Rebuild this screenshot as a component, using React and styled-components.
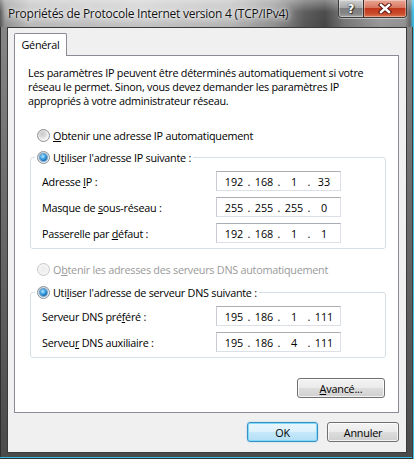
import React from 'react';
import styled, { createGlobalStyle } from 'styled-components';

const FONT = `"Open Sans", "Noto Sans", "DejaVu Sans", sans-serif`;

const Global = createGlobalStyle`
  html, body { margin: 0; padding: 0; background: #ffffff; }
  body { font-family: ${FONT}; font-size: 10.8px; letter-spacing: -0.25px; color: #000; }
  * { box-sizing: border-box; }
`;

const Window = styled.div`
  width: 414px;
  height: 459px;
  display: flex;
  flex-direction: column;
  padding: 0 7px 6px 7px;
  background: linear-gradient(to bottom, #8a8a8a 0, #6e6e6e 40%, #4a4a4a 100%);
  box-shadow: inset -1px 0 0 #3fc4ee, inset -2px 0 0 #3a3a3a, inset 0 -1px 0 #2f2f2f,
    inset 0 -2px 0 #38bde8, inset 1px 0 0 #2e2e2e;
`;

const TitleBar = styled.div`
  height: 27px;
  margin: 0 -7px;
  padding: 0 7px 0 8px;
  display: flex;
  align-items: flex-start;
  background:
    linear-gradient(to bottom, rgba(255, 255, 255, 0.35) 0, rgba(255, 255, 255, 0) 12px, rgba(0, 0, 0, 0.08) 27px),
    linear-gradient(to right, #5a5a5a 0, #9c9c9c 5px, #c6c6c6 30px, #d2d2d2 140px, #c2c2c2 230px,
      #9a9a9a 275px, #5e5e5e 305px, #4c4c4c 325px, #7e7e7e 345px, #a2a2a2 380px, #9a9a9a 405px,
      #6a6a6a 410px, #3fc4ee 413px);
`;

const TitleText = styled.div`
  margin-top: 6px;
  line-height: 16px;
  font-size: 12px;
  letter-spacing: -0.25px;
  color: #111;
  white-space: nowrap;
  text-shadow: 0 0 6px #fff, 0 0 10px rgba(255, 255, 255, 0.9), 0 0 2px rgba(255, 255, 255, 0.8);
  flex: 1;
`;

const CaptionGroup = styled.div`
  display: flex;
  height: 18px;
  border: 1px solid #3b3b3b;
  border-top: none;
  border-radius: 0 0 4px 4px;
  overflow: hidden;
  box-shadow: 0 1px 0 rgba(255, 255, 255, 0.45);
`;

const CaptionButton = styled.div`
  width: ${(p) => p.$w}px;
  height: 100%;
  display: flex;
  align-items: center;
  justify-content: center;
  border-left: ${(p) => (p.$first ? 'none' : '1px solid #3b2a26')};
  box-shadow: inset 0 0 0 1px rgba(255, 255, 255, 0.35);
  background: ${(p) =>
    p.$close
      ? 'linear-gradient(to bottom, #e9a795 0, #d9775f 45%, #c2381c 50%, #c94a2c 80%, #e07a52 100%)'
      : 'linear-gradient(to bottom, #d0d0d0 0, #a9a9a9 45%, #7f7f7f 50%, #858585 80%, #a8a8a8 100%)'};
`;

const HelpGlyph = styled.span`
  font-family: "DejaVu Sans", sans-serif;
  font-weight: bold;
  font-size: 12px;
  line-height: 12px;
  letter-spacing: 0;
  color: #fff;
  text-shadow: 0 0 1px #222, 0 0 1px #222, 1px 1px 1px #333;
`;

const Client = styled.div`
  flex: 1;
  background: #f0f0f0;
  border: 1px solid #3a3a3a;
  padding: 5px 7px 0 6px;
  display: flex;
  flex-direction: column;
`;

const TabStrip = styled.div`
  display: flex;
  height: 22px;
`;

const Tab = styled.div`
  position: relative;
  z-index: 1;
  width: 53px;
  height: 23px;
  background: #fff;
  border: 1px solid #898c95;
  border-bottom: none;
  border-radius: 2px 2px 0 0;
  display: flex;
  align-items: center;
  justify-content: center;
  padding-bottom: 1px;
`;

const Panel = styled.div`
  background: #fff;
  border: 1px solid #898c95;
  padding: 10px 13px 14px 13px;
  display: flex;
  flex-direction: column;
`;

const Intro = styled.p`
  margin: 0;
  line-height: 14px;
  white-space: nowrap;
`;

const RadioRow = styled.div`
  display: flex;
  align-items: center;
  gap: 3px;
  height: 16px;
  padding-left: 9px;
  margin-top: ${(p) => p.$mt}px;
  color: ${(p) => (p.$disabled ? '#9a9a9a' : '#000')};
  white-space: nowrap;
`;

const RadioCircle = styled.span`
  flex: none;
  width: 13px;
  height: 13px;
  border-radius: 50%;
  border: 1px solid ${(p) => (p.$disabled ? '#c9c9c9' : '#8c8f92')};
  background: ${(p) =>
    p.$disabled
      ? 'radial-gradient(circle at 50% 50%, #ececec 0, #f2f2f2 50%, #f7f7f7 100%)'
      : 'radial-gradient(circle at 40% 35%, #c9c9c9 0, #dcdcdc 35%, #f4f4f4 62%, #fdfdfd 100%)'};
  display: flex;
  align-items: center;
  justify-content: center;
  &::after {
    content: '';
    display: ${(p) => (p.$checked ? 'block' : 'none')};
    width: 7px;
    height: 7px;
    border-radius: 50%;
    background: radial-gradient(circle at 40% 35%, #b8ecff 0, #3fa3e6 40%, #0b5a9e 80%, #093f74 100%);
    box-shadow: 0 0 0 1px rgba(30, 90, 150, 0.45), 0 0 2px 1px rgba(120, 200, 255, 0.6);
  }
`;

const Key = styled.span`
  text-decoration: underline;
  text-underline-offset: 1px;
`;

const Group = styled.fieldset`
  margin: ${(p) => p.$mt}px 0 0 2px;
  width: 356px;
  min-width: 0;
  padding: 0;
  border: 1px solid #d5dfe5;
  border-radius: 3px;
`;

const Legend = styled.legend`
  margin-left: 4px;
  padding: 0 2px 0 0;
  height: 16px;
  display: flex;
  align-items: center;
  gap: 3px;
  white-space: nowrap;
`;

const LegendRadio = styled(RadioCircle)`
  margin-left: 2px;
`;

const FieldGrid = styled.div`
  display: grid;
  grid-template-columns: 174px 125px;
  row-gap: 6px;
  align-items: center;
  padding: 6px 0 5px 11px;
`;

const FieldLabel = styled.div`
  white-space: nowrap;
`;

const IpBox = styled.div`
  height: 20px;
  width: 125px;
  background: #fff;
  border: 1px solid #dbdfe6;
  border-top-color: #abadb3;
  border-left-color: #c9ccd3;
  display: flex;
  align-items: center;
  padding-left: 4px;
  letter-spacing: 0;
`;

const Octet = styled.span`
  width: 26px;
  text-align: center;
`;

const Dot = styled.span`
  width: 4px;
  text-align: center;
`;

const AdvRow = styled.div`
  display: flex;
  justify-content: flex-end;
  margin-top: 20px;
`;

const Button = styled.button`
  height: 20px;
  width: ${(p) => p.$w}px;
  padding: 0;
  font-family: ${FONT};
  font-size: 10.8px;
  letter-spacing: -0.2px;
  color: #000;
  border-radius: 3px;
  border: 1px solid ${(p) => (p.$default ? '#3c8fc4' : '#707070')};
  background: ${(p) =>
    p.$default
      ? 'linear-gradient(to bottom, #eaf7fd 0, #dcf1fc 48%, #c6e8fa 52%, #b4dff6 100%)'
      : 'linear-gradient(to bottom, #f3f3f3 0, #ebebeb 48%, #dddddd 52%, #cfcfcf 100%)'};
  box-shadow: ${(p) =>
    p.$default
      ? 'inset 0 0 0 1px #7fdcf8, 0 0 2px rgba(60, 170, 230, 0.4)'
      : 'inset 0 0 0 1px rgba(255, 255, 255, 0.75)'};
`;

const ButtonRow = styled.div`
  display: flex;
  justify-content: flex-end;
  gap: 9px;
  margin-top: 9px;
`;

function Ip({ parts }) {
  return (
    <IpBox>
      {parts.map((p, i) => (
        <React.Fragment key={i}>
          {i > 0 && <Dot>.</Dot>}
          <Octet>{p}</Octet>
        </React.Fragment>
      ))}
    </IpBox>
  );
}

function CloseIcon() {
  return (
    <svg width="14" height="11" viewBox="0 0 14 11">
      <path d="M3 2 L11 9 M11 2 L3 9" stroke="#5a1a10" strokeWidth="4.4" strokeLinecap="square" />
      <path d="M3 2 L11 9 M11 2 L3 9" stroke="#ffffff" strokeWidth="2.4" strokeLinecap="square" />
    </svg>
  );
}

export default function App() {
  return (
    <>
      <Global />
      <Window>
        <TitleBar>
          <TitleText>Propriétés de Protocole Internet version 4 (TCP/IPv4)</TitleText>
          <CaptionGroup>
            <CaptionButton $w={24} $first>
              <HelpGlyph>?</HelpGlyph>
            </CaptionButton>
            <CaptionButton $w={43} $close>
              <CloseIcon />
            </CaptionButton>
          </CaptionGroup>
        </TitleBar>
        <Client>
          <TabStrip>
            <Tab>Général</Tab>
          </TabStrip>
          <Panel>
            <Intro>
              Les paramètres IP peuvent être déterminés automatiquement si votre
              <br />
              réseau le permet. Sinon, vous devez demander les paramètres IP
              <br />
              appropriés à votre administrateur réseau.
            </Intro>
            <RadioRow $mt={19}>
              <RadioCircle />
              <span>
                <Key>O</Key>btenir une adresse IP automatiquement
              </span>
            </RadioRow>
            <Group $mt={6}>
              <Legend>
                <LegendRadio $checked />
                <span>
                  U<Key>t</Key>iliser l'adresse IP suivante :
                </span>
              </Legend>
              <FieldGrid>
                <FieldLabel>
                  Adresse <Key>I</Key>P :
                </FieldLabel>
                <Ip parts={['192', '168', '1', '33']} />
                <FieldLabel>
                  Masque de <Key>s</Key>ous-réseau :
                </FieldLabel>
                <Ip parts={['255', '255', '255', '0']} />
                <FieldLabel>
                  Passerelle par <Key>d</Key>éfaut :
                </FieldLabel>
                <Ip parts={['192', '168', '1', '1']} />
              </FieldGrid>
            </Group>
            <RadioRow $mt={12} $disabled>
              <RadioCircle $disabled />
              <span>
                O<Key>b</Key>tenir les adresses des serveurs DNS automatiquement
              </span>
            </RadioRow>
            <Group $mt={7}>
              <Legend>
                <LegendRadio $checked />
                <span>
                  Uti<Key>l</Key>iser l'adresse de serveur DNS suivante :
                </span>
              </Legend>
              <FieldGrid>
                <FieldLabel>
                  Serveur DNS pré<Key>f</Key>éré :
                </FieldLabel>
                <Ip parts={['195', '186', '1', '111']} />
                <FieldLabel>
                  Serveu<Key>r</Key> DNS auxiliaire :
                </FieldLabel>
                <Ip parts={['195', '186', '4', '111']} />
              </FieldGrid>
            </Group>
            <AdvRow>
              <Button $w={88}>
                <Key>A</Key>vancé...
              </Button>
            </AdvRow>
          </Panel>
          <ButtonRow>
            <Button $w={71} $default>
              OK
            </Button>
            <Button $w={72}>Annuler</Button>
          </ButtonRow>
        </Client>
      </Window>
    </>
  );
}
